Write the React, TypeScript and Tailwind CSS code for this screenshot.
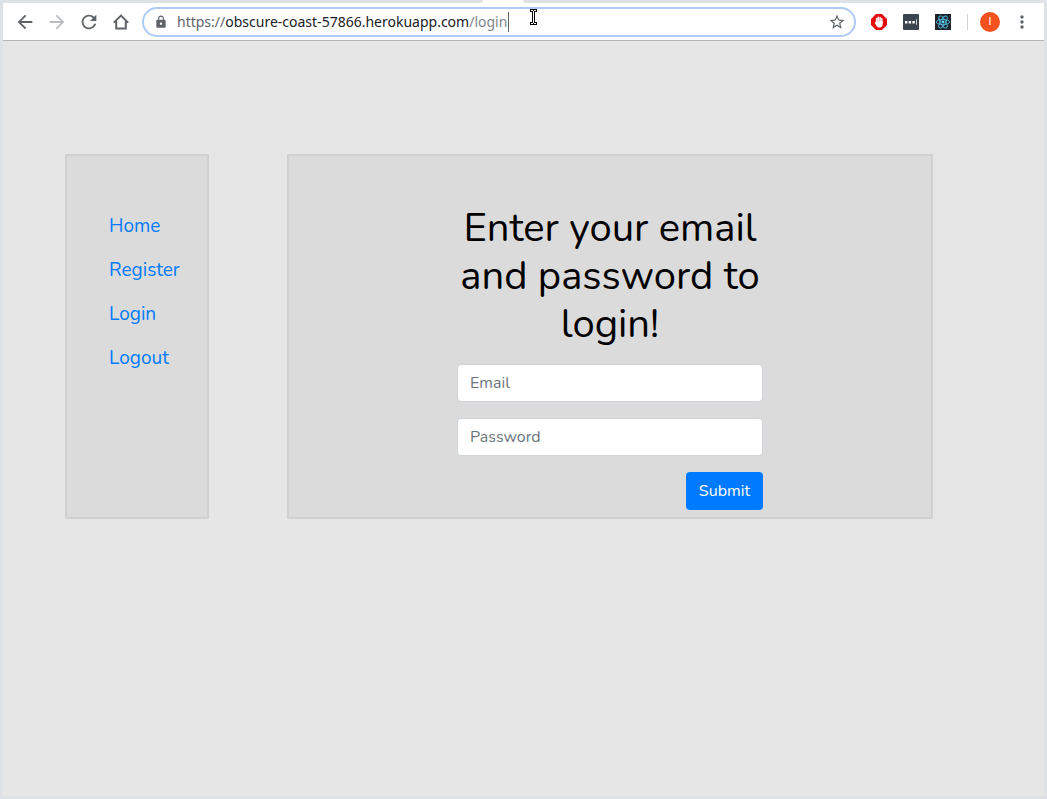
import { useState } from "react";
import { MdArrowBack, MdArrowForward, MdLock, MdMoreVert, MdRefresh, MdStarBorder } from "react-icons/md";

const links = ["Home", "Register", "Login", "Logout"];

const navButton = "flex size-7 items-center justify-center text-[#5f6368]";

function HomeIcon() {
  return (
    <svg viewBox="0 0 16 16" className="size-4" fill="none" stroke="currentColor" strokeWidth="2">
      <path d="M0.8 8.6 8 1.6l7.2 7M3.2 7v7.6h9.6V7" />
    </svg>
  );
}

function BlockerIcon() {
  return (
    <svg viewBox="0 0 16 16" className="size-4">
      <path d="M5 0h6l5 5v6l-5 5H5l-5-5V5z" fill="#e40d0d" />
      <path
        d="M5.6 4.4v4.4M7.3 3.2v5M9.1 3.4V8M10.8 4.8v5"
        stroke="#fff"
        strokeWidth="1.5"
        strokeLinecap="round"
      />
      <path d="M4.9 7.2h6.7v3c0 2-1 3.2-2.8 3.2H7.6c-1.2 0-1.9-.8-2.3-1.8L3.8 9z" fill="#fff" />
    </svg>
  );
}

function PasswordsIcon() {
  return (
    <svg viewBox="0 0 16 16" className="size-4">
      <rect width="16" height="16" rx="1" fill="#3b444f" />
      <path d="M2 7h2.4v2.4H2zM5.7 7h2.4v2.4H5.7zM9.4 7h2.4v2.4H9.4z" fill="#fff" />
      <path d="M13.5 5.2v5.6" stroke="#c8ccd0" />
    </svg>
  );
}

function ReactIcon() {
  return (
    <svg viewBox="0 0 16 16" className="size-4">
      <rect width="16" height="16" fill="#20232a" />
      <g fill="none" stroke="#53b9dc" strokeWidth="0.9">
        <ellipse cx="8" cy="8" rx="6.8" ry="2.6" />
        <ellipse cx="8" cy="8" rx="6.8" ry="2.6" transform="rotate(60 8 8)" />
        <ellipse cx="8" cy="8" rx="6.8" ry="2.6" transform="rotate(120 8 8)" />
      </g>
      <circle cx="8" cy="8" r="1.4" fill="#61dafb" />
    </svg>
  );
}

function TextCursor() {
  return (
    <svg viewBox="0 0 7 16" className="absolute top-0 left-full ml-[23px] h-4 w-[7px]" shapeRendering="crispEdges">
      <path d="M0 0h7v3H5v10h2v3H0v-3h2V3H0z" fill="#000" />
      <path d="M1 1h2v1h1V1h2v1H4v12h2v1H4v-1H3v1H1v-1h2V2H1z" fill="#fff" />
    </svg>
  );
}

function AddressBar() {
  const [editing, setEditing] = useState(false);
  return (
    <div className="flex h-[30px] min-w-0 flex-1 items-center rounded-full border-2 border-[#aecbf5] bg-white pr-2 pl-[10px]">
      <MdLock className="size-[14px] shrink-0 text-[#5f6368]" />
      <div className="relative ml-[9px] h-full flex-1 font-['Noto_Sans',sans-serif] text-[14px] leading-[26px]">
        <input
          aria-label="Address"
          type="text"
          onFocus={() => setEditing(true)}
          onBlur={() => setEditing(false)}
          className="absolute inset-0 w-full bg-transparent text-[#202124] outline-none"
        />
        {!editing && (
          <span className="pointer-events-none absolute inset-y-0 left-0 whitespace-nowrap text-[#80868b]">
            <span className="text-[#5f6368]">https://</span>
            <span className="text-[#202124]">obscure-coast-57866.herokuapp.com</span>
            /login
            <span className="absolute top-[3px] left-full ml-px h-5 w-px bg-[#5f6368]" />
            <TextCursor />
          </span>
        )}
      </div>
      <button type="button" aria-label="Bookmark" className="text-[#5f6368]">
        <MdStarBorder className="size-[18px]" />
      </button>
    </div>
  );
}

function Toolbar() {
  return (
    <header className="flex h-[38px] items-center border-b border-[#b4b5b7] bg-white pl-2">
      <div className="flex gap-1">
        <button type="button" aria-label="Back" className={navButton}>
          <MdArrowBack className="size-[22px]" />
        </button>
        <button type="button" aria-label="Forward" className="flex size-7 items-center justify-center text-[#babcbe]">
          <MdArrowForward className="size-[22px]" />
        </button>
        <button type="button" aria-label="Reload" className={navButton}>
          <MdRefresh className="size-[22px]" />
        </button>
        <button type="button" aria-label="Home page" className={navButton}>
          <HomeIcon />
        </button>
      </div>
      <div className="flex min-w-0 flex-1 px-[7px]">
        <AddressBar />
      </div>
      <div className="flex items-center gap-4 pl-2">
        <button type="button" aria-label="Ad blocker"><BlockerIcon /></button>
        <button type="button" aria-label="Passwords"><PasswordsIcon /></button>
        <button type="button" aria-label="React tools"><ReactIcon /></button>
        <span className="h-4 w-px bg-[#cfd1d4]" />
      </div>
      <button
        type="button"
        aria-label="Profile"
        className="ml-3 flex size-5 items-center justify-center rounded-full bg-[#f4511e] font-['Roboto',sans-serif] text-[11px] leading-5 text-white"
      >
        I
      </button>
      <button type="button" aria-label="Menu" className="mx-3 text-[#5f6368]">
        <MdMoreVert className="size-5" />
      </button>
    </header>
  );
}

const field =
  "h-[38px] w-full rounded border border-[#ced4da] bg-white px-3 text-base text-[#495057] outline-none placeholder:text-[#6c757d]";

export default function App() {
  return (
    <div className="flex min-h-screen flex-col bg-[#dee1e6] font-['Nunito','Lato',sans-serif]">
      <div className="flex h-[3px] bg-white">
        <div className="flex-[483] rounded-br bg-[#dee1e6]" />
        <div className="w-10" />
        <div className="flex-[524] rounded-bl bg-[#dee1e6]" />
      </div>
      <div className="mx-[3px] mb-[3px] flex flex-1 flex-col bg-[#e6e6e6]">
        <Toolbar />
        <div className="flex pt-[113px] pr-[111px] pl-[62px]">
          <nav className="w-36 shrink-0 border-2 border-[#d1d1d1] bg-[#dbdbdb] pt-12 pl-[42px]">
            <ul>
              {links.map((link) => (
                <li key={link}>
                  <a href={"#" + link.toLowerCase()} className="text-[19px] leading-[44px] text-[#007bff]">
                    {link}
                  </a>
                </li>
              ))}
            </ul>
          </nav>
          <main className="ml-[78px] flex min-w-0 flex-1 justify-center border-2 border-[#d1d1d1] bg-[#dbdbdb] pt-12 pb-[7px]">
            <form className="flex w-[306px] flex-col gap-4" onSubmit={(e) => e.preventDefault()}>
              <h1 className="text-center text-[40px] leading-[48px] text-black">
                Enter your email and password to login!
              </h1>
              <input type="email" aria-label="Email" placeholder="Email" className={field} />
              <input type="password" aria-label="Password" placeholder="Password" className={field} />
              <button type="submit" className="h-[38px] self-end rounded bg-[#007bff] px-[13px] text-base text-white">
                Submit
              </button>
            </form>
          </main>
        </div>
      </div>
    </div>
  );
}
